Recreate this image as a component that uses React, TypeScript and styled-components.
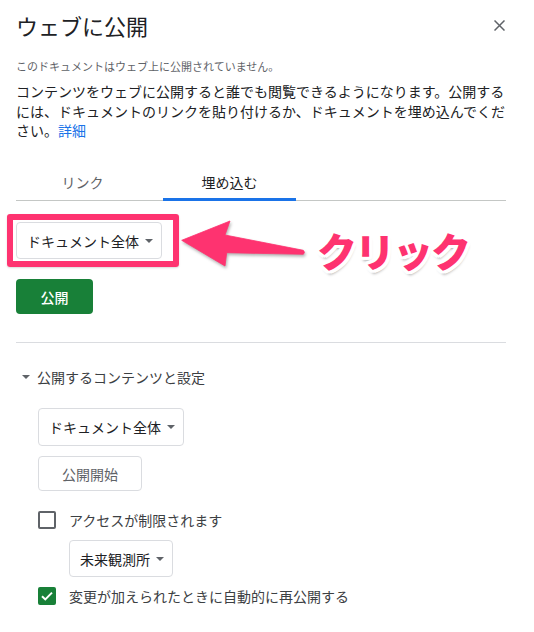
import React from "react";
import styled, { createGlobalStyle } from "styled-components";

const GlobalStyle = createGlobalStyle`
  html, body {
    margin: 0;
    padding: 0;
    background: #ffffff;
  }
  body {
    font-family: "Noto Sans CJK JP", "Noto Sans", Roboto, sans-serif;
    color: #202124;
  }
  * { box-sizing: border-box; }
`;

const Dialog = styled.div`
  width: 534px;
  height: 632px;
  padding: 0 0 0 16px;
  overflow: hidden;
`;

const Column = styled.div`
  width: 490px;
  display: flex;
  flex-direction: column;
`;

const Header = styled.div`
  display: flex;
  justify-content: space-between;
  align-items: center;
  padding-top: 11px;
`;

const Title = styled.h1`
  margin: 0;
  font-size: 22px;
  line-height: 28px;
  font-weight: 400;
  color: #202124;
`;

const CloseButton = styled.button`
  width: 12px;
  height: 12px;
  padding: 0;
  margin-right: 1px;
  border: none;
  background: transparent;
  display: flex;
  align-items: center;
  justify-content: center;
  color: #5f6368;
`;

const Status = styled.p`
  margin: 19px 0 0;
  font-size: 11px;
  line-height: 16px;
  color: #5f6368;
`;

const Description = styled.p`
  margin: 8px 0 0;
  width: 492px;
  font-size: 14px;
  line-height: 19.5px;
  color: #202124;
`;

const Link = styled.a`
  color: #1a73e8;
  text-decoration: none;
`;

const TabBar = styled.div`
  margin-top: 23.5px;
  display: flex;
  gap: 14px;
  border-bottom: 1px solid #c4c7c5;
`;

const Tab = styled.div<{ $active?: boolean }>`
  position: relative;
  width: 133px;
  padding: 8px 0 8px;
  text-align: center;
  font-size: 14px;
  line-height: 20px;
  color: ${(p) => (p.$active ? "#202124" : "#5f6368")};
  &::after {
    content: "";
    display: ${(p) => (p.$active ? "block" : "none")};
    position: absolute;
    left: 0;
    right: 0;
    bottom: -1px;
    height: 3px;
    background: #1a73e8;
  }
`;

const EmbedArea = styled.div`
  position: relative;
  display: flex;
  flex-direction: column;
  align-items: flex-start;
  padding-top: 21px;
`;

const Highlight = styled.div`
  position: absolute;
  left: -9px;
  top: 13px;
  width: 172px;
  height: 53px;
  border: 6px solid #fe3370;
  border-radius: 3px;
  box-shadow: 0 1px 2px rgba(0, 0, 0, 0.15);
`;

const ArrowSvg = styled.svg`
  position: absolute;
  left: 162px;
  top: 15px;
  overflow: visible;
  filter: drop-shadow(1px 2px 1.5px rgba(0, 0, 0, 0.3));
`;

const Callout = styled.div`
  position: absolute;
  left: 301px;
  top: 29px;
  font-size: 40px;
  line-height: 40px;
  font-weight: 900;
  letter-spacing: -2px;
  color: #fe3370;
  text-shadow: 3px 0 0 #fff, -3px 0 0 #fff, 0 3px 0 #fff, 0 -3px 0 #fff,
    2px 2px 0 #fff, -2px 2px 0 #fff, 2px -2px 0 #fff, -2px -2px 0 #fff,
    3px 2px 0 #fff, -3px 2px 0 #fff, 3px -2px 0 #fff, -3px -2px 0 #fff,
    2px 3px 0 #fff, -2px 3px 0 #fff, 2px -3px 0 #fff, -2px -3px 0 #fff,
    1px 4px 3px rgba(0, 0, 0, 0.35);
`;

const Select = styled.button<{ $height?: number }>`
  display: inline-flex;
  align-items: center;
  gap: 6px;
  height: ${(p) => p.$height ?? 37}px;
  padding: 0 8px 0 10px;
  border: 1px solid #dadce0;
  border-radius: 4px;
  background: #ffffff;
  font-family: inherit;
  font-size: 14px;
  color: #202124;
`;

const Caret = styled.span`
  width: 0;
  height: 0;
  border-left: 4px solid transparent;
  border-right: 4px solid transparent;
  border-top: 4px solid #5f6368;
`;

const PublishButton = styled.button`
  margin-top: 20px;
  width: 77px;
  height: 35px;
  border: none;
  border-radius: 4px;
  background: #188038;
  color: #ffffff;
  font-family: inherit;
  font-size: 14px;
  font-weight: 500;
`;

const Divider = styled.hr`
  margin: 28px 0 0;
  width: 490px;
  border: none;
  border-top: 1px solid #dadce0;
`;

const SectionHeader = styled.div`
  margin-top: 24px;
  display: flex;
  align-items: center;
  gap: 7px;
  padding-left: 6px;
  font-size: 14px;
  line-height: 20px;
  color: #3c4043;
`;

const Settings = styled.div`
  padding-left: 22px;
  display: flex;
  flex-direction: column;
  align-items: flex-start;
`;

const SettingsSelect = styled(Select)`
  margin-top: 21px;
`;

const StartButton = styled.button`
  margin-top: 10px;
  width: 104px;
  height: 35px;
  border: 1px solid #dadce0;
  border-radius: 4px;
  background: #ffffff;
  color: #5f6368;
  font-family: inherit;
  font-size: 14px;
`;

const CheckRow = styled.label<{ $top: number }>`
  margin-top: ${(p) => p.$top}px;
  display: flex;
  align-items: center;
  gap: 13px;
  font-size: 14px;
  line-height: 18px;
  color: #3c4043;
`;

const Box = styled.span<{ $checked?: boolean }>`
  width: 18px;
  height: 18px;
  border-radius: 2px;
  border: 2px solid ${(p) => (p.$checked ? "#188038" : "#5f6368")};
  background: ${(p) => (p.$checked ? "#188038" : "#ffffff")};
  display: flex;
  align-items: center;
  justify-content: center;
`;

const Indented = styled.div`
  margin-top: 11px;
  padding-left: 31px;
`;

const Arrow = () => (
  <ArrowSvg width="135" height="55" viewBox="0 0 135 55">
    <path
      d="M3.7 24.3 L52 5 L47 19 L125.3 34.3 Q127.5 36.4 125.3 38.3 L48.7 36.7 L47 50 Z"
      fill="#fe3370"
      stroke="#fe3370"
      strokeWidth="0.8"
      strokeLinejoin="round"
    />
  </ArrowSvg>
);

export default function App() {
  return (
    <>
      <GlobalStyle />
      <Dialog>
        <Column>
          <Header>
            <Title>ウェブに公開</Title>
            <CloseButton aria-label="閉じる">
              <svg width="11" height="11" viewBox="0 0 11 11">
                <path d="M0.5 0.5 L10.5 10.5 M10.5 0.5 L0.5 10.5" stroke="#5f6368" strokeWidth="1.5" />
              </svg>
            </CloseButton>
          </Header>
          <Status>このドキュメントはウェブ上に公開されていません。</Status>
          <Description>
            コンテンツをウェブに公開すると誰でも閲覧できるようになります。公開するには、ドキュメントのリンクを貼り付けるか、ドキュメントを埋め込んでください。
            <Link href="#">詳細</Link>
          </Description>
          <TabBar>
            <Tab>リンク</Tab>
            <Tab $active>埋め込む</Tab>
          </TabBar>
          <EmbedArea>
            <Select>
              ドキュメント全体
              <Caret />
            </Select>
            <Highlight />
            <Arrow />
            <Callout>クリック</Callout>
            <PublishButton>公開</PublishButton>
          </EmbedArea>
          <Divider />
          <SectionHeader>
            <Caret />
            公開するコンテンツと設定
          </SectionHeader>
          <Settings>
            <SettingsSelect $height={38}>
              ドキュメント全体
              <Caret />
            </SettingsSelect>
            <StartButton>公開開始</StartButton>
            <CheckRow $top={20}>
              <Box />
              アクセスが制限されます
            </CheckRow>
            <Indented>
              <Select>
                未来観測所
                <Caret />
              </Select>
            </Indented>
            <CheckRow $top={10}>
              <Box $checked>
                <svg width="14" height="14" viewBox="0 0 14 14">
                  <path d="M2 7.2 L5.3 10.4 L12 3.6" fill="none" stroke="#fff" strokeWidth="2" />
                </svg>
              </Box>
              変更が加えられたときに自動的に再公開する
            </CheckRow>
          </Settings>
        </Column>
      </Dialog>
    </>
  );
}
